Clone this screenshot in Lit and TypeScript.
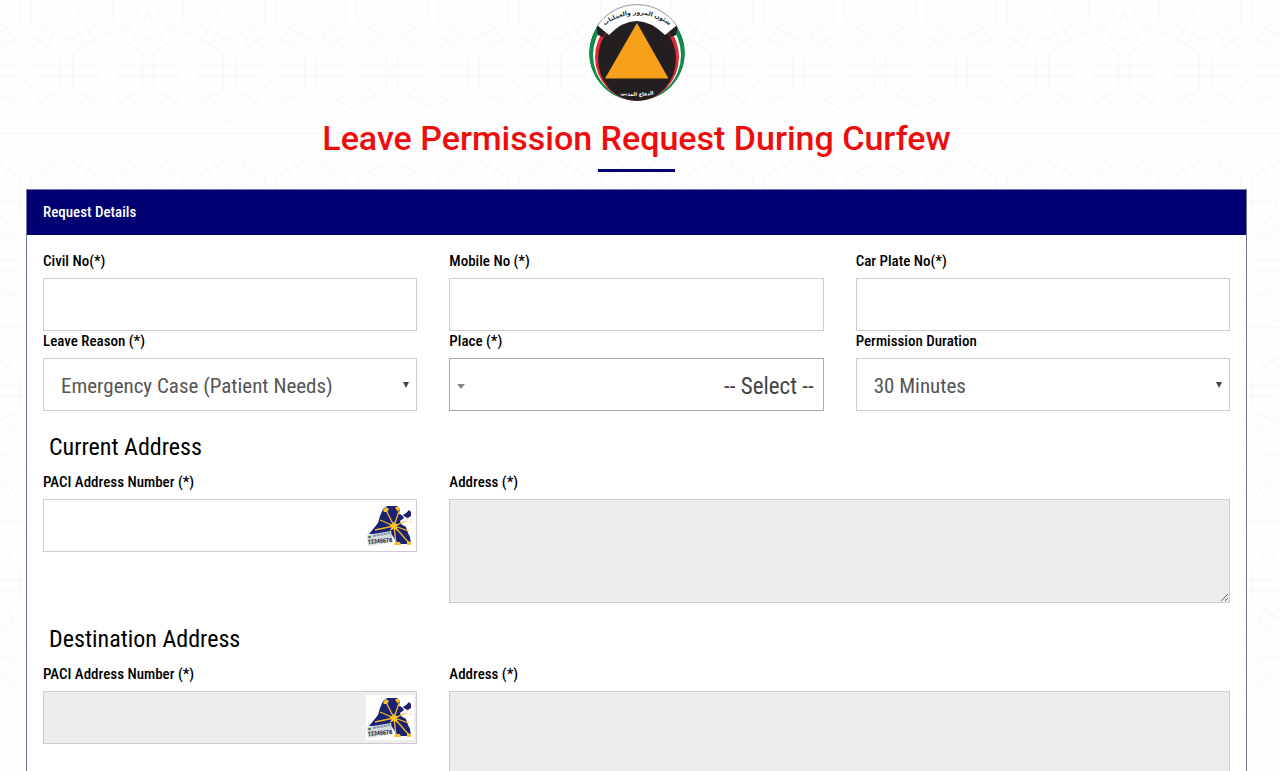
import { LitElement, html, css, svg, unsafeCSS } from "lit";
import { customElement, property } from "lit/decorators.js";

/* Geometric lattice: six-sided stars joined by double diagonal strips. */
function latticeTile(): string {
  const stepX = 244 / 3;
  const half = stepX / 2;
  const hex = (x: number, y: number) =>
    `M${x} ${y - 38}L${x + 35} ${y - 19}V${y + 19}L${x} ${y + 37}L${x - 35} ${y + 19}V${y - 19}Z`;
  const strip = (x1: number, y1: number, x2: number, y2: number) => {
    const dx = x2 - x1;
    const dy = y2 - y1;
    const len = Math.hypot(dx, dy);
    const ux = dx / len;
    const uy = dy / len;
    return [-5, 5]
      .map((o) => {
        const ox = -uy * o;
        const oy = ux * o;
        return `M${x1 + ux * 8 + ox} ${y1 + uy * 8 + oy}L${x2 - ux * 8 + ox} ${y2 - uy * 8 + oy}`;
      })
      .join("");
  };
  let d = "";
  for (let band = 0; band < 4; band++) {
    const top = -61 + band * 194;
    const upper = top + 64;
    const lower = top + 132;
    const base = top + 194;
    d += `M0 ${base}H244`;
    for (let i = -1; i < 5; i++) {
      const x = 26 + (i - 1) * stepX;
      const xo = x + half;
      d += hex(x, lower) + hex(xo, upper);
      for (const o of [-5, 5]) {
        d += `M${x + 9} ${lower + o}H${x + stepX - 9}M${xo + 9} ${upper + o}H${xo + stepX - 9}`;
      }
      d += strip(x, lower, xo, upper) + strip(xo, upper, x + stepX, lower);
      d += strip(x, lower, xo, base) + strip(x, lower, xo - stepX, base);
      d += strip(x, top, xo, upper) + strip(x, top, xo - stepX, upper);
    }
  }
  const image = `<svg xmlns="http://www.w3.org/2000/svg" width="244" height="715"><path d="${d}" fill="none" stroke="#f6f6f6"/></svg>`;
  return `url("data:image/svg+xml,${encodeURIComponent(image)}")`;
}

const arrow = (fill: string, w: number, h: number) =>
  unsafeCSS(
    `url("data:image/svg+xml,${encodeURIComponent(
      `<svg xmlns="http://www.w3.org/2000/svg" width="${w}" height="${h}"><path d="M0 0H${w}L${w / 2} ${h}Z" fill="${fill}"/></svg>`
    )}")`
  );

const controls = css`
  * {
    box-sizing: border-box;
  }
  .field {
    display: flex;
    flex-direction: column;
  }
  .label {
    margin-bottom: 7px;
    font-size: 15px;
    font-weight: 500;
    line-height: 20px;
    color: #000;
  }
  .control {
    display: block;
    width: 100%;
    height: 53px;
    margin: 0;
    padding: 0 17px;
    border: 1px solid #ccc;
    border-radius: 0;
    background-color: #fff;
    font: inherit;
    font-size: 21px;
    color: #555;
    outline: none;
  }
  .control:disabled {
    background-color: #ededed;
    opacity: 1;
  }
`;

@customElement("paci-field")
export class PaciField extends LitElement {
  @property({ type: Boolean }) locked = false;

  static styles = [
    controls,
    css`
      :host {
        display: block;
      }
      .holder {
        position: relative;
      }
      .finder {
        position: absolute;
        top: 4px;
        right: 3px;
        width: 48px;
        height: 45px;
        padding: 0;
        border: 0;
        background: #fff;
        cursor: pointer;
      }
      .map {
        display: block;
        width: 48px;
        height: 45px;
      }
      .digits {
        font: 700 6px "Roboto Condensed", "Liberation Sans Narrow", sans-serif;
        fill: #222;
      }
    `,
  ];

  render() {
    return html`
      <div class="field">
        <label class="label" for="paci">PACI Address Number (*)</label>
        <div class="holder">
          <input class="control" id="paci" type="text" ?disabled=${this.locked} />
          <button class="finder" type="button" aria-label="PACI">
            <svg class="map" viewBox="12 10 48 45" aria-hidden="true">
              <path
                d="M29 16L33 13H43L46 16L45 21L48 22L50 25L46 28L47 31L52 34L54 40L56 44L57 51H44L38 42L15 41L20 35L24 30L26 23Z"
                fill="#1c2273"
              />
              <path d="M52 20L55 17L57 19V23L54 25L51 24L49 22Z" fill="#1c2273" />
              <path
                d="M40 33L32 17M40 33L45 18M40 33L26 27M40 33L21 37M40 33L52 28M40 33L55 38M40 33L56 51M40 33L42 51"
                stroke="#f2b822"
                stroke-width="1.300"
                fill="none"
              />
              <path d="M40 28L41.500 31L45 31L42.500 34L44 38L40 35.500L36 38L37.500 34L35 31.500L39 31Z" fill="#ffc629" />
              <path d="M29 17L32 14L35 16L33 19H30ZM41 14H45L46 17L43 18ZM41 49H46L47 52H40ZM53 48L57 49V52H53Z" fill="#f2c230" />
              <path d="M52 25H54L53 26.500ZM56 28L58 29L56.500 30Z" fill="#f0ab60" />
              <path d="M13 42L37 38L39 49L14 53Z" fill="#d5dbe4" />
              <path d="M19 43L36 40" stroke="#8c99b0" stroke-width="2" stroke-dasharray="3 .7" />
              <circle cx="15.500" cy="44" r="1.300" fill="#555" />
              <text class="digits" x="14" y="51" transform="rotate(-5 14 51)">12345678</text>
            </svg>
          </button>
        </div>
      </div>
    `;
  }
}

@customElement("app-root")
export class AppRoot extends LitElement {
  static styles = [
    controls,
    css`
      :host {
        display: block;
        min-height: 100vh;
        padding: 4px 33px 32px 26px;
        box-sizing: border-box;
        background: #fefefe ${unsafeCSS(latticeTile())} 0 0 repeat-x;
        font-family: "Roboto Condensed", "Liberation Sans Narrow", "Arial Narrow", "Liberation Sans", sans-serif;
        color: #000;
      }
      .masthead {
        display: flex;
        flex-direction: column;
        align-items: center;
      }
      .emblem {
        display: block;
        width: 98px;
        height: 98px;
      }
      .emblem-top {
        font: 700 6px "DejaVu Sans", sans-serif;
        fill: #222;
      }
      .emblem-bottom {
        font: 700 5px "DejaVu Sans", sans-serif;
        fill: #fff;
      }
      .title {
        margin: 16px 0 0;
        font-family: Roboto, sans-serif;
        font-size: 34px;
        font-weight: 500;
        line-height: 40px;
        text-align: center;
        color: #ee0d0d;
      }
      .rule {
        width: 77px;
        height: 3px;
        margin: 11px 0 17px;
        border: 0;
        background: #000072;
      }
      .panel {
        border: 1px solid #74779c;
        background: #fff;
      }
      .panel-title {
        margin: 0;
        padding: 12px 16px 13px;
        background: #000072;
        font-size: 15px;
        font-weight: 500;
        line-height: 20px;
        color: #fff;
      }
      .panel-body {
        padding: 16px;
      }
      .row {
        display: grid;
        grid-template-columns: repeat(3, minmax(0, 1fr));
        column-gap: 32px;
      }
      .wide {
        grid-column: span 2;
      }
      .picker {
        appearance: none;
        padding-top: 3px;
        background-image: ${arrow("#444", 6, 6)};
        background-repeat: no-repeat;
        background-position: right 7px top 23px;
      }
      .picker-rtl {
        padding: 3px 9px 0;
        border-color: #aaa;
        background-image: ${arrow("#888", 8, 5)};
        background-position: left 7px top 25px;
        font-size: 23px;
        color: #444;
      }
      .section {
        margin: 21px 6px 10px;
        font-size: 24px;
        font-weight: 400;
        line-height: 30px;
      }
      .area {
        height: 104px;
        padding: 12px 17px;
        resize: vertical;
      }
    `,
  ];

  private emblem() {
    return svg`
      <svg class="emblem" viewBox="18 3 98 98" role="img" aria-label="شئون المرور والعمليات">
        <defs>
          <path id="arc-top" d="M24 36A52 52 0 0 1 110 36" />
          <path id="arc-bottom" d="M40 91Q67 99 94 91" />
          <clipPath id="disc"><circle cx="67" cy="52" r="48" /></clipPath>
        </defs>
        <g clip-path="url(#disc)">
          <circle cx="67" cy="52" r="48" fill="#118a4c" />
          <ellipse cx="67" cy="54" rx="44" ry="45" fill="#fff" />
          <ellipse cx="67" cy="56" rx="42" ry="44" fill="#e02a35" />
          <ellipse cx="67" cy="58" rx="39" ry="42" fill="#231f20" />
          <path d="M26 24L38 28L33 36L28 34Z M108 24L96 28L101 36L106 34Z" fill="#231f20" />
          <path d="M22 20L39 34Q66 6 95 34L112 20L100 0H34Z" fill="#fff" />
        </g>
        <path d="M27 25A48 48 0 0 1 107 25" fill="none" stroke="#777" stroke-width=".7" />
        <path d="M67 22L98.500 77.500H35Z" fill="#f9a01b" />
        <text class="emblem-top" text-anchor="middle">
          <textPath href="#arc-top" startOffset="50%">شئون المرور والعمليات</textPath>
        </text>
        <text class="emblem-bottom" text-anchor="middle">
          <textPath href="#arc-bottom" startOffset="50%">الدفاع المدني</textPath>
        </text>
      </svg>
    `;
  }

  private textField(id: string, label: string) {
    return html`
      <div class="field">
        <label class="label" for=${id}>${label}</label>
        <input class="control" id=${id} type="text" />
      </div>
    `;
  }

  private address(id: string, title: string, locked: boolean) {
    return html`
      <h2 class="section">${title}</h2>
      <div class="row">
        <paci-field ?locked=${locked}></paci-field>
        <div class="field wide">
          <label class="label" for=${id}>Address (*)</label>
          <textarea class="control area" id=${id} disabled></textarea>
        </div>
      </div>
    `;
  }

  render() {
    return html`
      <header class="masthead">
        ${this.emblem()}
        <h1 class="title">Leave Permission Request During Curfew</h1>
        <hr class="rule" />
      </header>
      <form class="panel">
        <h2 class="panel-title">Request Details</h2>
        <div class="panel-body">
          <div class="row">
            ${this.textField("civil", "Civil No(*)")}
            ${this.textField("mobile", "Mobile No (*)")}
            ${this.textField("plate", "Car Plate No(*)")}
            <div class="field">
              <label class="label" for="reason">Leave Reason (*)</label>
              <select class="control picker" id="reason">
                <option>Emergency Case (Patient Needs)</option>
              </select>
            </div>
            <div class="field">
              <label class="label" for="place">Place (*)</label>
              <select class="control picker picker-rtl" id="place" dir="rtl">
                <option>-- Select --</option>
              </select>
            </div>
            <div class="field">
              <label class="label" for="duration">Permission Duration</label>
              <select class="control picker" id="duration">
                <option>30 Minutes</option>
              </select>
            </div>
          </div>
          ${this.address("current", "Current Address", false)}
          ${this.address("destination", "Destination Address", true)}
        </div>
      </form>
    `;
  }
}
